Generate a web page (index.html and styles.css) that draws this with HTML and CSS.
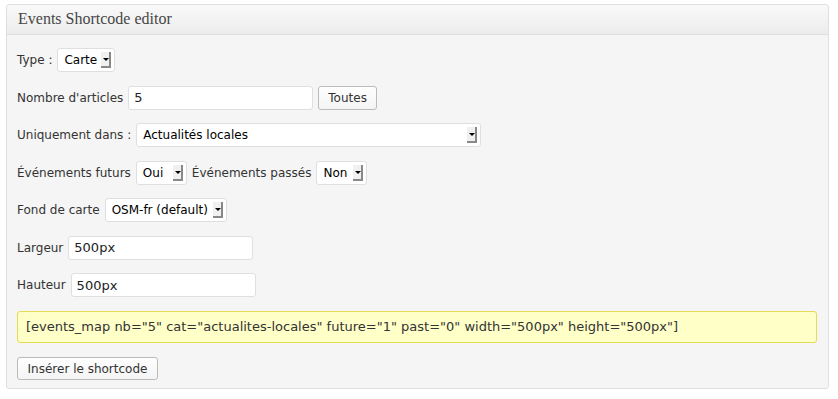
FILE: index.html
```html
<!DOCTYPE html>
<html lang="fr">
  <head>
    <meta charset="UTF-8" />
    <title>Events Shortcode editor</title>
    <link rel="stylesheet" href="styles.css">
  </head>
  <body>
    <div class="postbox">
      <h3 class="hndle">Events Shortcode editor</h3>
      <div class="inside">
        <div class="row">
          <label>Type :</label>
          <span class="select w-58"><span class="value">Carte</span><span class="arrow"></span></span>
        </div>

        <div class="row">
          <label>Nombre d'articles</label>
          <span class="field w-185">5</span>
          <span class="button">Toutes</span>
        </div>

        <div class="row">
          <label>Uniquement dans :</label>
          <span class="select w-345"><span class="value">Actualités locales</span><span class="arrow"></span></span>
        </div>

        <div class="row">
          <label>Événements futurs</label>
          <span class="select w-51"><span class="value">Oui</span><span class="arrow"></span></span>
          <label>Événements passés</label>
          <span class="select w-51"><span class="value">Non</span><span class="arrow"></span></span>
        </div>

        <div class="row">
          <label>Fond de carte</label>
          <span class="select w-122"><span class="value">OSM-fr (default)</span><span class="arrow"></span></span>
        </div>

        <div class="row">
          <label>Largeur</label>
          <span class="field w-185">500px</span>
        </div>

        <div class="row">
          <label>Hauteur</label>
          <span class="field w-185">500px</span>
        </div>

        <div class="shortcode">[events_map nb="5" cat="actualites-locales" future="1" past="0" width="500px" height="500px"]</div>

        <div class="row last">
          <span class="button wide">Insérer le shortcode</span>
        </div>
      </div>
    </div>
  </body>
</html>
```

FILE: styles.css
```css
* {
  box-sizing: border-box;
}

body {
  margin: 0;
  padding: 4px 9px 0 6px;
  background: #fff;
  font-family: "DejaVu Sans", Verdana, sans-serif;
  font-size: 12px;
  color: #333;
}

.postbox {
  border: 1px solid #dfdfdf;
  border-radius: 3px;
  background: #f5f5f5;
  height: 385px;
}

.hndle {
  margin: 0;
  height: 30px;
  padding: 5px 11px 0;
  font-family: "Liberation Serif", "Times New Roman", serif;
  font-weight: normal;
  font-size: 16px;
  color: #464646;
  background: linear-gradient(#f9f9f9, #ececec);
  border-bottom: 1px solid #dfdfdf;
  border-radius: 3px 3px 0 0;
}

.inside {
  padding: 13px 11px 0 10px;
  background: #f5f5f5;
}

.row {
  display: flex;
  align-items: center;
  height: 24px;
  margin-bottom: 13.5px;
}

.row label {
  margin-right: 5px;
}

.select {
  display: inline-flex;
  align-items: center;
  height: 24px;
  padding: 0 3px 0 6px;
  background: #fff;
  border: 1px solid #dfdfdf;
  border-radius: 3px;
  color: #000;
  margin-right: 5px;
}

.select .value {
  flex: 1;
  margin-right: 4px;
  white-space: nowrap;
}

.select.w-51 {
  width: 51px;
}

.select.w-58 {
  width: 58px;
}

.select.w-122 {
  width: 122px;
}

.select.w-345 {
  width: 345px;
}

.arrow {
  flex: none;
  width: 10px;
  height: 16px;
  background: #f0f0f0;
  border-right: 2px solid #888;
  border-bottom: 2px solid #888;
  position: relative;
}

.arrow::after {
  content: "";
  position: absolute;
  left: 2px;
  top: 6px;
  border-left: 3px solid transparent;
  border-right: 3px solid transparent;
  border-top: 3px solid #000;
}

.field {
  display: inline-flex;
  align-items: center;
  height: 24px;
  padding: 0 5px;
  background: #fff;
  border: 1px solid #dfdfdf;
  border-radius: 3px;
  color: #222;
  font-size: 13px;
}

.field.w-185 {
  width: 185px;
}

.button {
  display: inline-flex;
  align-items: center;
  justify-content: center;
  height: 24px;
  margin-left: 5px;
  padding: 0 9px;
  background: linear-gradient(#fefefe, #f4f4f4);
  border: 1px solid #bbb;
  border-radius: 3px;
  color: #333;
  white-space: nowrap;
}

.button.wide {
  margin-left: 0;
  width: 141px;
  height: 23px;
}

.shortcode {
  height: 32px;
  padding: 7px 8px 0;
  margin: 0 0 14px;
  background: #ffffc8;
  border: 1px solid #e6db55;
  border-radius: 3px;
  font-size: 13px;
  color: #333;
  white-space: nowrap;
}
```
